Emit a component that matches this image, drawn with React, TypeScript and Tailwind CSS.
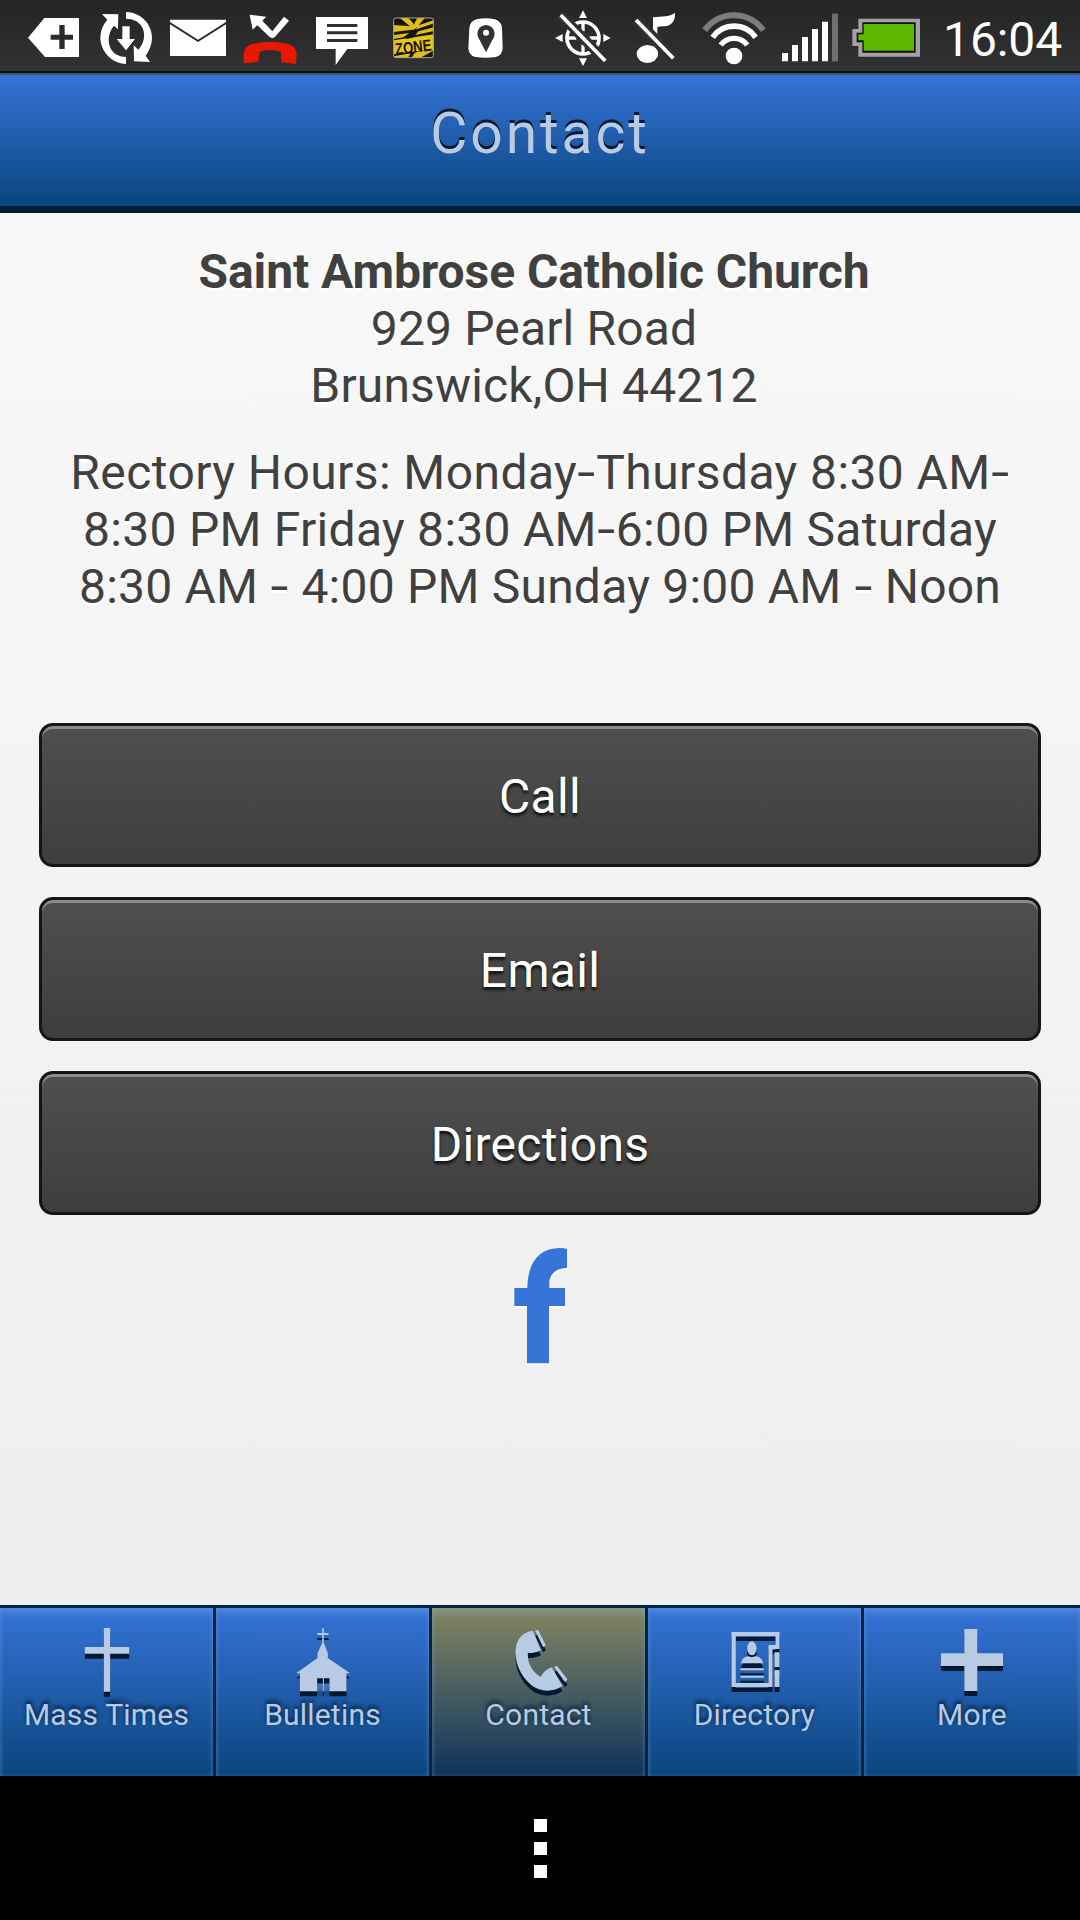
import type { ReactNode } from "react";

/* Status bar glyph; each one takes a slice of a shared strip, three units per pixel. */
function Slot({ x, w, children }: { x: number; w: number; children?: ReactNode }) {
  return (
    <svg className="h-[71px] shrink-0" width={w} height={71} viewBox={`${x * 3} 0 ${w * 3} 213`} fill="#fff">
      {children}
    </svg>
  );
}

function StatusBar() {
  return (
    <header className="flex h-[75px] border-b-2 border-[#3a5674] bg-[#0b0f0b]">
      <div className="flex h-[71px] w-full bg-linear-to-b from-[#252525] to-[#323133]">
        <Slot x={0} w={90}>
          <path d="M84 113 L133 54 H237 V171 H135 Z" />
          <path d="M178 75 H194 V104 H219 V119 H194 V147 H178 V119 H152 V104 H178 Z" fill="#2b2b2b" />
        </Slot>
        <Slot x={90} w={70}>
          <path d="M306 42 L355 43 L354 88 L342 77 C319 103 321 147 350 164 Q363 171 378 171 V192 C335 190 301 155 301 111 Q302 82 322 59 Z" />
          <path d="M378 36 C421 37 456 71 456 114 Q455 143 437 167 L450 186 L402 184 L401 136 L415 149 C441 121 438 78 406 62 Q394 56 378 56 Z" />
          <path d="M367 79 H389 V117 H405 L378 151 L350 117 H367 Z" />
        </Slot>
        <Slot x={160} w={75}>
          <path d="M510 59 H678 V66 L594 119 L510 66 Z" />
          <path d="M510 73 L594 126 L678 73 V168 H510 Z" />
        </Slot>
        <Slot x={235} w={71}>
          <path d="M749 44 L799 50 L787 62 L817 94 L852 50 L867 62 L824 112 Q817 117 808 110 L772 76 L758 89 Z" />
          <path
            d="M731 190 L731 163 Q733 140 754 133 Q810 117 868 133 Q889 141 890 164 L888 192 L844 187 L843 159 Q841 154 834 153 Q809 147 785 153 Q778 155 778 162 L774 186 Z"
            fill="#ea1800"
          />
        </Slot>
        <Slot x={306} w={74}>
          <path d="M948 51 H1104 V147 H1042 L1007 195 V147 H948 Z" />
          <path d="M981 72 H1072 V81 H981 Z M981 94 H1072 V103 H981 Z M981 117 H1072 V126 H981 Z" fill="#2e2e2e" />
        </Slot>
        <Slot x={380} w={70}>
          <g transform="translate(1050)">
            <clipPath id="zone">
              <rect x="131" y="54" width="119" height="119" rx="7" />
            </clipPath>
            <g clipPath="url(#zone)">
              <rect x="131" y="54" width="119" height="119" fill="#17150a" />
              <path d="M131 75 L180 79 L150 54 H175 L192 72 L202 54 H224 L206 76 L252 60 V70 L199 88 L131 96 Z" fill="#dfbf13" />
              <path d="M131 105 L178 99 L160 112 L131 117 Z M205 94 L252 82 V93 L196 105 Z" fill="#dfbf13" />
              <path d="M131 121 L252 103 V146 L131 163 Z" fill="#e6c714" />
              <path d="M181 50 L192 75 L196 50 Z M168 117 L201 80 L187 113 Z" fill="#17150a" />
              <path d="M131 169 L182 160 L173 175 H131 Z M194 158 L252 141 V151 L208 175 H184 Z" fill="#dfbf13" />
              <text
                x="135"
                y="158"
                transform="rotate(-7 190 145)"
                textLength="110"
                lengthAdjust="spacingAndGlyphs"
                fontFamily="Liberation Sans"
                fontSize="49"
                fontWeight="700"
                fill="#17150a"
              >
                ZONE
              </text>
            </g>
            <rect x="131" y="54" width="119" height="119" rx="7" fill="none" stroke="#a8a8a0" strokeWidth="3" />
          </g>
        </Slot>
        <Slot x={450} w={85}>
          <g transform="translate(1050)">
            <path d="M358 85 Q360 63 380 58 Q408 51 434 58 Q454 63 456 84 L458 145 Q457 166 438 171 Q408 176 376 171 Q357 167 355 145 Z" />
            <path d="M408 157 L389 120 Q382 110 382 101 A26 26 0 0 1 434 101 Q434 110 427 120 Z" fill="#333" />
            <circle cx="408" cy="98" r="9" />
          </g>
        </Slot>
        <Slot x={535} w={85}>
          <g transform="translate(1050)">
            <circle cx="699" cy="114" r="48" fill="none" stroke="#fff" strokeWidth="11" />
            <path d="M694 66 h10 v28 h-10 Z M694 134 h10 v28 h-10 Z M651 109 h28 v10 h-28 Z M719 109 h28 v10 h-28 Z" />
            <path d="M699 31 L711 54 H687 Z M699 198 L687 175 H711 Z M615 114 L638 102 V126 Z M782 114 L760 102 V126 Z" />
            <path d="M632 45 L766 183" stroke="#303030" strokeWidth="30" />
            <path d="M632 45 L766 183" stroke="#fff" strokeWidth="11" />
          </g>
        </Slot>
        <Slot x={620} w={75}>
          <g transform="translate(1050)">
            <ellipse cx="892" cy="162" rx="32" ry="27" />
            <path d="M909 52 C935 49 963 50 975 38 C977 62 964 78 943 79 Q930 78 922 81 V172 H909 Z" />
            <path d="M858 60 L970 175" stroke="#303030" strokeWidth="34" />
            <path d="M899 141 Q924 148 923 162 L910 172 Z" />
            <path d="M858 60 L970 175" stroke="#fff" strokeWidth="11" />
          </g>
        </Slot>
        <Slot x={695} w={80}>
          <g transform="translate(2100)" fill="none">
            <path d="M14 91 A108 108 0 0 1 190 91" stroke="#7c7c7c" strokeWidth="18" />
            <path d="M38 112 A79 79 0 0 1 167 112" stroke="#fff" strokeWidth="17" />
            <path d="M62 135 A50 50 0 0 1 142 135" stroke="#fff" strokeWidth="16" />
            <circle cx="102" cy="168" r="25" fill="#fff" />
          </g>
        </Slot>
        <Slot x={775} w={70}>
          <g transform="translate(2100)">
            <path d="M246 159 h18 v25 h-18 Z M276 135 h18 v49 h-18 Z M306 111 h18 v73 h-18 Z M336 87 h18 v97 h-18 Z M366 65 h18 v119 h-18 Z" />
            <path d="M396 41 h18 v143 h-18 Z" fill="#707070" />
          </g>
        </Slot>
        <Slot x={845} w={85}>
          <g transform="translate(2100)">
            <path d="M475 56 H660 V170 H475 V138 H457 V87 H475 Z" fill="#a4a1a6" />
            <path d="M487 67 H647 V158 H487 V127 H470 V98 H487 Z" fill="#0c1400" />
            <path d="M491 72 H642 V152 H491 V121 H475 V103 H491 Z" fill="#5fb800" />
          </g>
        </Slot>
        <span className="ml-[13px] mt-1 text-[48px] leading-[71px] tracking-[-0.1px] text-white">16:04</span>
      </div>
    </header>
  );
}

function Dash() {
  return <span className="inline-block w-[19px] scale-x-135 text-center">-</span>;
}

function ActionButton({ label }: { label: string }) {
  return (
    <button className="h-36 w-full rounded-[14px] border-[3px] border-[#151515] bg-linear-to-b from-[#4f4f4f] to-[#3e3e3e] pt-[3px] text-[48px] leading-[57px] tracking-[0.3px] text-white shadow-[inset_0_3px_0_#8b8b8b] [text-shadow:0_3px_3px_#111]">
      {label}
    </button>
  );
}

type Tab = { label: string; cx: number; icon: ReactNode; active?: boolean };

const tabs: Tab[] = [
  {
    label: "Mass Times",
    cx: 319.5,
    icon: <path d="M310 114 H329 V171 H386 V191 H329 V305 H310 V191 H253 V171 H310 Z" />,
  },
  {
    label: "Bulletins",
    cx: 967.5,
    icon: (
      <>
        <path d="M965 115 H970 V129 H984 V135 H970 V158 L982 190 V204 L1049 250 H1038 V304 H987 V265 H970 V304 H967 V265 H950 V304 H898 V250 H887 L951 204 V190 L965 158 V135 H951 V129 H965 Z" />
        <path d="M950 282 H987 V304 H950 Z" fillOpacity="0.22" />
      </>
    ),
  },
  {
    label: "Contact",
    cx: 355.5,
    active: true,
    icon: (
      <>
        <path d="M337 122 L361 181 Q343 192 322 188 C320 222 338 248 361 260 Q372 239 394 232 L426 288 C400 306 361 308 332 285 C301 259 284 222 285 183 C287 145 307 127 337 122 Z" />
        <path d="M344 122 L353 119 L376 166 L368 172 Z M401 232 L409 227 L441 268 L434 277 Z" />
      </>
    ),
  },
  {
    label: "Directory",
    cx: 1003.5,
    icon: (
      <>
        <path
          fillRule="evenodd"
          d="M933 126 H1077 V177 H1056 V291 H933 Z M946 138 V279 H1044 V165 H1065 V138 Z"
        />
        <path d="M1062 187 H1077 V231 H1062 Z M1062 240 H1077 V291 H1062 Z M960 235 H1030 V241 H960 Z M960 257 H1030 V263 H960 Z" />
        <ellipse cx="994" cy="175" rx="14" ry="21" />
        <path d="M961 220 Q966 199 984 199 Q994 204 1004 199 Q1023 199 1029 220 Z" />
      </>
    ),
  },
  {
    label: "More",
    cx: 576,
    icon: <path d="M553 117 H592 V190 H669 V228 H592 V303 H553 V228 H483 V190 H553 Z" />,
  },
];

function TabButton({ label, cx, icon, active }: Tab) {
  return (
    <button
      className={
        "flex flex-col items-center pt-[17px] text-[#b9cae4] shadow-[inset_0_6px_6px_rgba(140,190,235,0.25),inset_0_0_4px_rgba(140,190,235,0.22)] " +
        (active ? "bg-linear-to-b from-[#84865f] to-[#0b325a]" : "bg-linear-to-b from-[#3573d8] to-[#08467e]")
      }
    >
      <svg
        className="h-[75px] w-[72px] shrink-0 drop-shadow-[0_5.5px_0_#001a33]"
        viewBox={`${cx - 108} 105 216 225`}
        fill="currentColor"
      >
        {icon}
      </svg>
      <span className="relative text-[30px] leading-[30px] tracking-[0.2px] whitespace-nowrap [text-shadow:0_-3px_4px_#001a33]">
        {label}
      </span>
    </button>
  );
}

export default function App() {
  return (
    <div className="flex h-[1920px] w-[1080px] flex-col overflow-hidden bg-black font-['Roboto',sans-serif]">
      <StatusBar />

      <div className="h-[138px] border-b-[7px] border-[#001d38] bg-linear-to-b from-[#3573d8] to-[#08467e] text-center">
        <h1 className="text-[57px] leading-[117px] tracking-[2.9px] text-[#b9cae4] [text-shadow:0_-3px_0_#001a33]">
          Contact
        </h1>
      </div>

      <main className="flex h-[1392px] flex-col bg-linear-to-b from-[#f8f8f8] to-[#eeeeee] px-[39px] pt-[30px]">
        <div className="text-center text-[48px] leading-[57px] whitespace-nowrap text-[#404040] [text-shadow:0_3px_0_#fff]">
          <p className="pr-[12px] tracking-[0.15px]">
            <strong className="font-bold tracking-[-0.08px]">Saint Ambrose Catholic Church</strong>
            <br />
            929 Pearl Road
            <br />
            Brunswick,OH 44212
          </p>
          <p className="mt-[30px]">
            <span className="tracking-[0.42px]">
              Rectory Hours: Monday
              <Dash />
              Thursday 8:30 AM
              <Dash />
            </span>
            <br />
            <span className="tracking-[0.28px]">
              8:30 PM Friday 8:30 AM
              <Dash />
              6:00 PM Saturday
            </span>
            <br />
            <span className="tracking-[0.22px]">
              8:30 AM <Dash /> 4:00 PM Sunday 9:00 AM <Dash /> Noon
            </span>
          </p>
        </div>

        <div className="mt-[108px] flex flex-col gap-[30px]">
          <ActionButton label="Call" />
          <ActionButton label="Email" />
          <ActionButton label="Directions" />
        </div>

        <svg
          className="mt-[5px] h-40 w-[120px] shrink-0 self-center drop-shadow-[0_2px_0_#fff]"
          viewBox="0 0 360 480"
          fill="#3674d7"
        >
          <path d="M141 430 V258 H103 V204 H142 C143 129 176 84 240 84 Q252 84 261 87 V143 C230 144 208 161 208 189 V204 H255 V258 H207 V430 Z" />
        </svg>
      </main>

      <nav className="grid h-[171px] grid-cols-[213px_213px_213px_213px_216px] gap-x-[3px] border-t-[3px] border-[#00233f] bg-[#00233f]">
        {tabs.map((t) => (
          <TabButton key={t.label} {...t} />
        ))}
      </nav>

      <div className="flex grow flex-col items-center gap-[10px] bg-black pt-[43px]">
        <span className="size-[13px] bg-white" />
        <span className="size-[13px] bg-white" />
        <span className="size-[13px] bg-white" />
      </div>
    </div>
  );
}
